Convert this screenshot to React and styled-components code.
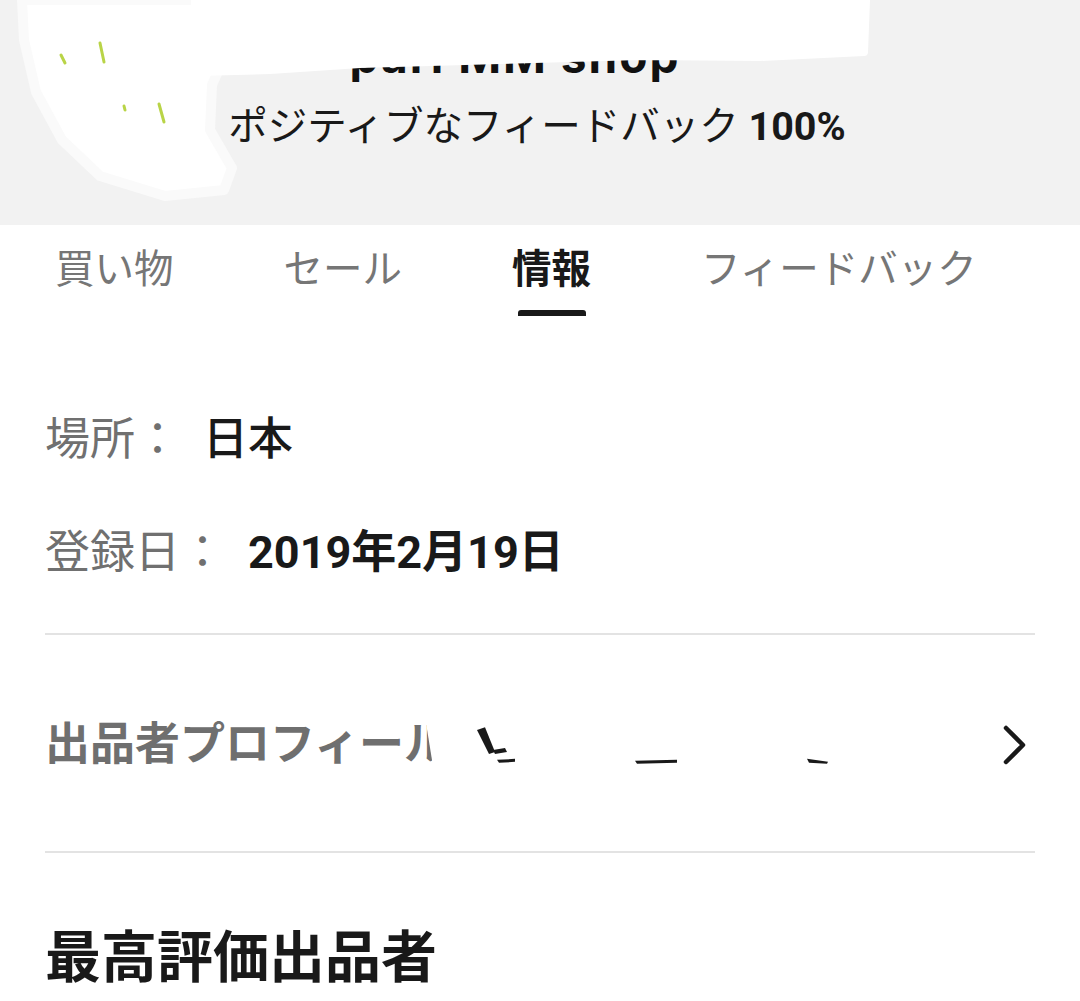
import React from "react";
import styled, { createGlobalStyle } from "styled-components";

const GlobalStyle = createGlobalStyle`
  body {
    margin: 0;
    background: #ffffff;
    font-family: Roboto, "Noto Sans CJK JP", sans-serif;
    color: #191919;
  }
`;

const tabs = ["買い物", "セール", "情報", "フィードバック"];

export default function App() {
  return (
    <Page>
      <GlobalStyle />
      <Header>
        <ShopName>pari MM shop</ShopName>
        <Feedback>
          ポジティブなフィードバック <Percent>100%</Percent>
        </Feedback>
        <Scribble viewBox="0 0 1080 225" preserveAspectRatio="none">
          <path
            d="M22 0 L240 0 L232 40 L212 85 L210 130 L232 168 L224 190 L165 196 L100 176 L62 140 L36 92 L24 40 Z"
            fill="#ffffff"
            stroke="#fafafa"
            strokeWidth="10"
            strokeLinejoin="round"
          />
          <path
            d="M195 0 L866 0 L864 52 L760 57 L640 56 L500 60 L360 64 L270 70 L196 72 Z"
            fill="#ffffff"
            stroke="#ffffff"
            strokeWidth="8"
            strokeLinejoin="round"
          />
          <g stroke="#b9d447" strokeWidth="3" strokeLinecap="round">
            <line x1="61" y1="55" x2="65" y2="63" />
            <line x1="100" y1="43" x2="104" y2="62" />
            <line x1="124" y1="106" x2="125" y2="110" />
            <line x1="159" y1="104" x2="164" y2="122" />
          </g>
        </Scribble>
      </Header>

      <TabBar>
        {tabs.map((t) => (
          <Tab key={t}>
            <TabLabel $active={t === "情報"}>{t}</TabLabel>
            <TabUnderline $active={t === "情報"} />
          </Tab>
        ))}
      </TabBar>

      <Section>
        <InfoList>
          <InfoRow>
            <InfoLabel>場所：</InfoLabel>
            <InfoValue>日本</InfoValue>
          </InfoRow>
          <InfoRow>
            <InfoLabel>登録日：</InfoLabel>
            <InfoValue $bold>2019年2月19日</InfoValue>
          </InfoRow>
        </InfoList>

        <ProfileRow>
          <ProfileText>
            出品者プロフィール<ProfileName>pari MM shop</ProfileName>
          </ProfileText>
          <Chevron viewBox="0 0 26 42">
            <path
              d="M4 4 L21 21 L4 38"
              fill="none"
              stroke="#191919"
              strokeWidth="4.5"
              strokeLinecap="round"
              strokeLinejoin="round"
            />
          </Chevron>
          <Scribble viewBox="0 0 990 218" preserveAspectRatio="none">
            <path d="M378 70 L800 76 L798 145 L390 145 Z" fill="#ffffff" />
            <path d="M432 96 L440 93 L450 118 L444 120 Z" fill="#191919" />
            <path d="M448 116 L460 114 L462 118 L450 120 Z" fill="#191919" />
            <path d="M452 126 L470 125 L470 128 L454 129 Z" fill="#191919" />
            <path d="M590 127 L632 126 L632 129 L592 130 Z" fill="#191919" />
            <path d="M762 125 L783 128 L782 130 L764 129 Z" fill="#191919" />
            <rect x="493" y="212" width="74" height="8" fill="#ffffff" />
            <rect x="667" y="212" width="20" height="8" fill="#ffffff" />
          </Scribble>
        </ProfileRow>

        <Heading>最高評価出品者</Heading>
      </Section>
    </Page>
  );
}

const Page = styled.div`
  width: 1080px;
  min-height: 1001px;
  overflow: hidden;
`;

const Header = styled.header`
  position: relative;
  height: 225px;
  background: #f2f2f2;
  display: flex;
  flex-direction: column;
  align-items: center;
`;

const ShopName = styled.div`
  margin-top: 28px;
  margin-left: -50px;
  font-family: Inter, "Noto Sans CJK JP", sans-serif;
  font-size: 46px;
  line-height: 56px;
  font-weight: 700;
  letter-spacing: 2px;
  color: #111111;
`;

const Feedback = styled.div`
  margin-top: 18px;
  margin-left: -6px;
  font-size: 39.5px;
  line-height: 50px;
  color: #191919;
  white-space: nowrap;
`;

const Percent = styled.span`
  font-weight: 700;
`;

const Scribble = styled.svg`
  position: absolute;
  inset: 0;
  width: 100%;
  height: 100%;
  pointer-events: none;
`;

const TabBar = styled.nav`
  display: flex;
  gap: 110px;
  padding: 20px 0 0 55px;
  height: 73px;
`;

const Tab = styled.div`
  display: flex;
  flex-direction: column;
  align-items: center;
`;

const TabLabel = styled.span`
  font-size: 39.5px;
  line-height: 50px;
  font-weight: ${(p) => (p.$active ? 700 : 400)};
  color: ${(p) => (p.$active ? "#191919" : "#767676")};
  white-space: nowrap;
`;

const TabUnderline = styled.span`
  margin-top: 15px;
  width: 68px;
  height: 6px;
  border-radius: 3px 3px 0 0;
  background: ${(p) => (p.$active ? "#191919" : "transparent")};
`;

const Section = styled.main`
  padding: 0 45px;
`;

const InfoList = styled.div`
  display: flex;
  flex-direction: column;
  gap: 53px;
  padding: 92px 0 50px;
  border-bottom: 2px solid #e3e3e3;
`;

const InfoRow = styled.div`
  display: flex;
  align-items: center;
  gap: 23px;
  height: 60px;
`;

const InfoLabel = styled.span`
  font-size: 45px;
  line-height: 60px;
  color: #707070;
`;

const InfoValue = styled.span`
  font-size: 45px;
  line-height: 60px;
  font-weight: ${(p) => (p.$bold ? 700 : 500)};
  color: #191919;
`;

const ProfileRow = styled.div`
  position: relative;
  display: flex;
  align-items: center;
  justify-content: space-between;
  padding: 80px 0 76px;
  border-bottom: 2px solid #e3e3e3;
`;

const ProfileText = styled.span`
  font-size: 45px;
  line-height: 60px;
  font-weight: 700;
  color: #6f6f6f;
  white-space: nowrap;
`;

const ProfileName = styled.span`
  color: #191919;
  margin-left: 10px;
`;

const Chevron = styled.svg`
  width: 26px;
  height: 42px;
  margin-right: 7px;
`;

const Heading = styled.h2`
  margin: 70px 0 0;
  font-size: 56px;
  line-height: 70px;
  font-weight: 700;
  color: #191919;
`;
